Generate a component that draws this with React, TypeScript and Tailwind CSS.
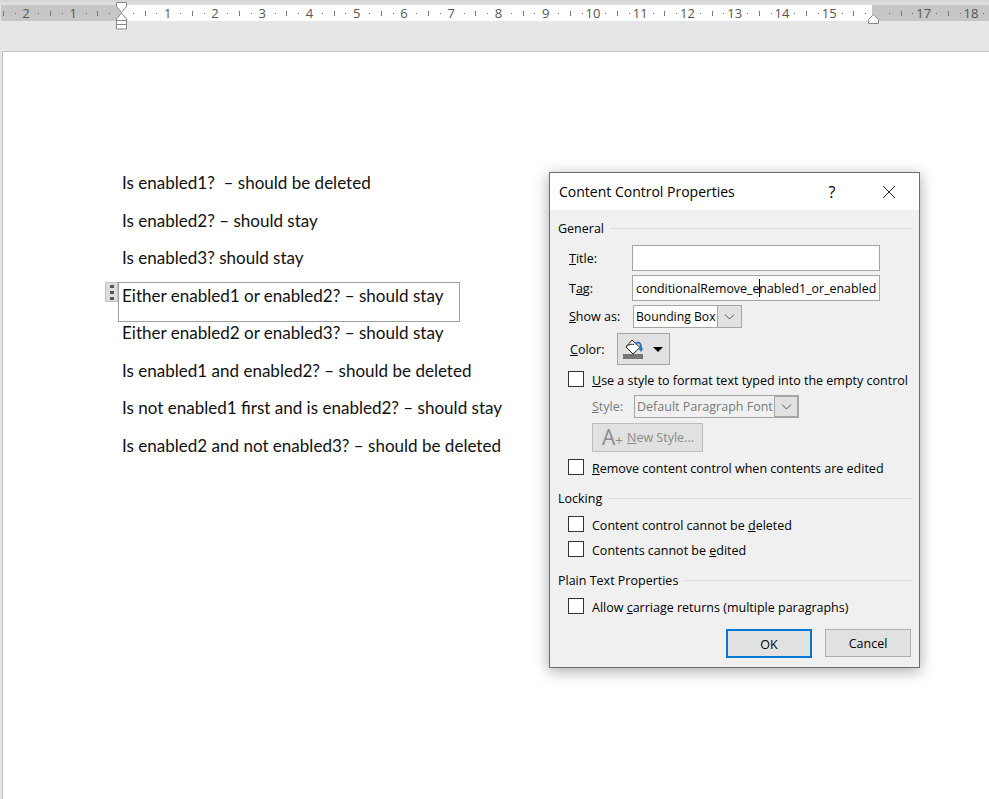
import { ReactNode } from "react"

const lines = [
  "Is enabled1?  – should be deleted",
  "Is enabled2? – should stay",
  "Is enabled3? should stay",
  "Either enabled1 or enabled2? – should stay",
  "Either enabled2 or enabled3? – should stay",
  "Is enabled1 and enabled2? – should be deleted",
  "Is not enabled1 first and is enabled2? – should stay",
  "Is enabled2 and not enabled3? – should be deleted",
]

const Ruler = () => {
  const cm = 47.25
  const zero = 121
  const marks = []
  for (let n = -3; n <= 18; n++) {
    const x = zero + n * cm
    if (n !== 0 && n !== 16 && n >= -2) {
      marks.push(
        <text key={n} x={x - 0.5} y={18} textAnchor="middle" fontSize="13" fill="#555" fontFamily="Open Sans, sans-serif">
          {Math.abs(n)}
        </text>
      )
    }
    marks.push(<rect key={"a" + n} x={Math.round(x + cm / 4)} y={13} width={1} height={1} fill="#666" />)
    marks.push(<rect key={"b" + n} x={Math.round(x + cm / 2)} y={11} width={1} height={5} fill="#777" />)
    marks.push(<rect key={"c" + n} x={Math.round(x + (cm * 3) / 4)} y={13} width={1} height={1} fill="#666" />)
  }
  return (
    <svg width="989" height="52" className="block">
      <defs>
        <linearGradient id="band" x1="0" y1="0" x2="0" y2="1">
          <stop offset="0" stopColor="#d4d4d4" />
          <stop offset="1" stopColor="#e2e2e2" />
        </linearGradient>
      </defs>
      <rect width="989" height="5" fill="url(#band)" />
      <rect x="1" y="5" width="120" height="16" fill="#c6c6c6" />
      <rect x="121" y="5" width="751" height="16" fill="#fff" />
      <rect x="872" y="5" width="117" height="16" fill="#c6c6c6" />
      {marks}
      {/* indent markers */}
      <path d="M116.5 2.5h10v4l-5 6-5-6z" fill="#fff" stroke="#888" />
      <path d="M121.5 13l5 6v1.500h-10V19z" fill="#fff" stroke="#888" />
      <path d="M116.500 20.500h10v8.500h-10z" fill="#fff" stroke="#888" />
      <path d="M116.500 24.500h10" stroke="#888" />
      <path d="M873.500 14.500l5 5v4h-10v-4z" fill="#fff" stroke="#888" />
    </svg>
  )
}

const Check = ({ children, className }: { children: ReactNode; className: string }) => (
  <div className={"flex items-center h-[16px] pl-[18px] " + className}>
    <span className="w-[16px] h-[16px] bg-white border border-[#333] shrink-0" />
    <span className="ml-[8px] pt-[4px] whitespace-nowrap">{children}</span>
  </div>
)

const Group = ({ title, className }: { title: string; className: string }) => (
  <div className={"flex items-center h-[18px] pl-[8px] pr-[7px] " + className}>
    <span className="pt-[2px] whitespace-nowrap">{title}</span>
    <span className="flex-1 h-px bg-[#dcdcdc] ml-[6px]" />
  </div>
)

const Chevron = ({ color }: { color: string }) => (
  <svg width="11" height="6" viewBox="0 0 11 6" fill="none" stroke={color}>
    <path d="M1 .5l4.500 4.500L10 .5" />
  </svg>
)

const Dialog = () => (
  <div
    className="absolute left-[549px] top-[172px] w-[371px] h-[496px] bg-[#f0f0f0] border border-[#6e6e6e] shadow-[0_3px_14px_rgba(0,0,0,0.35)] text-[12.500px] leading-[18px] text-black"
    style={{ fontFamily: "'Open Sans', sans-serif" }}
  >
    <div className="h-[37px] bg-white flex items-center pl-[9px] text-[14px]">
      <span className="flex-1">Content Control Properties</span>
      <span className="w-[16px] mr-[42px] text-center text-[16px]">?</span>
      <svg width="14" height="14" viewBox="0 0 14 14" stroke="#222" className="mr-[23px]">
        <path d="M1 1l12 12M13 1L1 13" />
      </svg>
    </div>

    <Group title="General" className="mt-[9px]" />
    <div className="flex items-center h-[26px] mt-[8px] pl-[19px]">
      <span className="w-[63px] pt-[2px]"><u>T</u>itle:</span>
      <div className="w-[248px] h-[26px] bg-white border border-[#a5a5a5]" />
    </div>
    <div className="flex items-center h-[26px] mt-[4px] pl-[19px]">
      <span className="w-[63px] pt-[2px]">T<u>a</u>g:</span>
      <div className="relative w-[248px] h-[26px] bg-white border border-[#a5a5a5] pl-[3px] whitespace-nowrap overflow-hidden text-[12.400px] leading-[26px]">
        conditionalRemove_enabled1_or_enabled
        <span className="absolute left-[126px] top-[3px] w-px h-[18px] bg-black" />
      </div>
    </div>
    <div className="flex items-center h-[23px] mt-[4px] pl-[19px]">
      <span className="w-[64px]"><u>S</u>how as:</span>
      <div className="flex w-[109px] h-[23px] bg-white border border-[#a5a5a5]">
        <span className="flex-1 pl-[2px] whitespace-nowrap overflow-hidden text-[12.200px] leading-[21px]">Bounding Box</span>
        <span className="w-[24px] bg-[#e1e1e1] border-l border-[#a5a5a5] flex items-center justify-center">
          <Chevron color="#555" />
        </span>
      </div>
    </div>
    <div className="flex items-center h-[32px] mt-[5px] pl-[20px]">
      <span className="w-[47px] pt-[2px]"><u>C</u>olor:</span>
      <div className="w-[53px] h-[32px] bg-[#e1e1e1] border border-[#a5a5a5] flex items-center pl-[5px]">
        <svg width="21" height="24" viewBox="0 0 21 24">
          <path d="M9 3l8 7.500-7 6.500-7-7z" fill="#fff" stroke="#222" />
          <path d="M3.500 9.500C6 7 9 7 11 7.500" fill="none" stroke="#222" />
          <path d="M12 7c3-2.500 5.500-1.500 6 2v3" fill="none" stroke="#2f77bd" strokeWidth="2" />
          <path d="M15.500 11.500h5L18 15z" fill="#2f77bd" />
          <rect x="0" y="17" width="20" height="5" fill="#757575" />
        </svg>
        <svg width="10" height="5" viewBox="0 0 10 5" className="ml-[9px]">
          <path d="M0 0h10L5 5z" fill="#000" />
        </svg>
      </div>
    </div>

    <Check className="mt-[6px]"><u>U</u>se a style to format text typed into the empty control</Check>
    <div className="flex items-center h-[23px] mt-[8px] pl-[42px] text-[#7a7a7a]">
      <span className="w-[42px] pt-[1px]"><u>S</u>tyle:</span>
      <div className="flex w-[165px] h-[23px] border border-[#a5a5a5]">
        <span className="flex-1 pl-[2px] whitespace-nowrap overflow-hidden leading-[21px]">Default Paragraph Font</span>
        <span className="w-[24px] bg-[#e1e1e1] border border-[#a5a5a5] flex items-center justify-center">
          <Chevron color="#555" />
        </span>
      </div>
    </div>
    <div className="ml-[42px] mt-[5px] w-[111px] h-[29px] bg-[#e1e1e1] border border-[#bdbdbd] flex items-center text-[#8a8a8a] pl-[9px]">
      <span className="relative text-[21px] leading-[21px] w-[25px]">
        A<span className="absolute left-[13px] top-[7px] text-[14px] leading-[14px]">+</span>
      </span>
      <span className="whitespace-nowrap"><u>N</u>ew Style...</span>
    </div>
    <Check className="mt-[7px]"><u>R</u>emove content control when contents are edited</Check>

    <Group title="Locking" className="mt-[14px]" />
    <Check className="mt-[9px]">Content control cannot be <u>d</u>eleted</Check>
    <Check className="mt-[9px]">Contents cannot be <u>e</u>dited</Check>

    <Group title="Plain Text Properties" className="mt-[14px]" />
    <Check className="mt-[9px]">Allow <u>c</u>arriage returns (multiple paragraphs)</Check>

    <div className="flex items-start mt-[15px] pl-[176px]">
      <button className="w-[86px] h-[29px] pt-[2px] bg-[#e1e1e1] border-2 border-[#0078d7]">OK</button>
      <button className="w-[86px] h-[28px] pt-[2px] ml-[13px] bg-[#e1e1e1] border border-[#adadad]">Cancel</button>
    </div>
  </div>
)

export default function App() {
  return (
    <div className="relative w-[989px] h-[799px] overflow-hidden bg-[#e6e6e6]">
      <Ruler />
      <div className="ml-[2px] -mt-px h-[748px] bg-white border-l border-t border-[#c0c0c0] pt-[118px] pl-[119px]" style={{ fontFamily: "Lato, sans-serif" }}>
        {lines.map((line, i) => (
          <div key={i} className="relative h-[37.500px] leading-[26px] text-[17.050px] text-[#111] whitespace-pre">
            {line}
            {i === 3 && (
              <>
                <span className="absolute left-[-4px] top-[-0.500px] w-[342px] h-[40px] border border-[#a0a0a0]" />
                <span className="absolute left-[-17px] top-[-0.500px] w-[13px] h-[20px] bg-[#dedede] border border-[#c4c4c4] flex flex-col items-center justify-center gap-[3px]">
                  <i className="block w-[4px] h-[3px] bg-[#555]" />
                  <i className="block w-[4px] h-[3px] bg-[#555]" />
                  <i className="block w-[4px] h-[3px] bg-[#555]" />
                </span>
              </>
            )}
          </div>
        ))}
      </div>
      <Dialog />
    </div>
  )
}
